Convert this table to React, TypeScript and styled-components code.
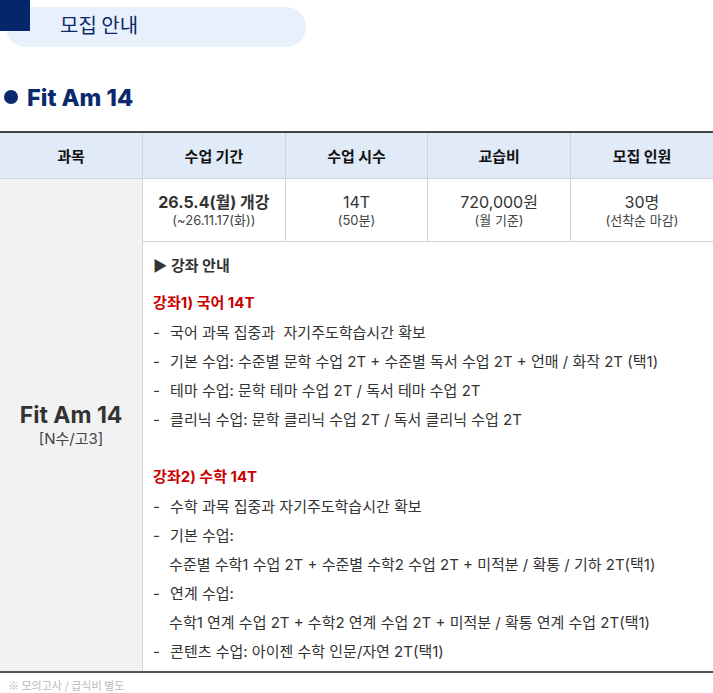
import React from 'react';
import styled, { createGlobalStyle } from 'styled-components';

const GlobalStyle = createGlobalStyle`
  body {
    margin: 0;
    background: #ffffff;
    font-family: Inter, "Noto Sans CJK KR", sans-serif;
    color: #333333;
  }
`;

const Page = styled.div`
  width: 713px;
`;

const TopBar = styled.div`
  position: relative;
  height: 47px;
  padding: 7px 0 0 6px;
  box-sizing: border-box;
`;

const Pill = styled.div`
  width: 300px;
  height: 40px;
  border-radius: 20px;
  background: #e8f0fc;
  display: flex;
  align-items: center;
  padding: 0 0 5px 54px;
  box-sizing: border-box;
  font-size: 20px;
  color: #0b2a6b;
  font-family: "Noto Sans CJK KR", sans-serif;
`;

const Corner = styled.span`
  position: absolute;
  left: 0;
  top: 0;
  width: 30px;
  height: 31px;
  background: #06266b;
`;

const Title = styled.h2`
  margin: 0;
  height: 84px;
  box-sizing: border-box;
  padding: 16px 0 0 4px;
  display: flex;
  align-items: center;
  gap: 9px;
  font-size: 23.5px;
  font-weight: 800;
  color: #0b2a6e;
  font-family: Inter, "Noto Sans CJK KR", sans-serif;

  &::before {
    content: '';
    width: 14px;
    height: 14px;
    border-radius: 50%;
    background: #0b2a6e;
  }
`;

const Table = styled.table`
  width: 713px;
  border-collapse: collapse;
  table-layout: fixed;
  border-top: 2px solid #444;
  border-bottom: 2px solid #555;
`;

const Th = styled.th`
  height: 45px;
  padding: 0;
  background: #e1eaf7;
  border: 1px solid #cfd4da;
  border-top: none;
  font-size: 15px;
  font-weight: 700;
  color: #111;
  font-family: "Noto Sans CJK KR", sans-serif;
  &:first-child { border-left: none; }
  &:last-child { border-right: none; }
`;

const Td = styled.td<{ $sub?: boolean }>`
  height: 62px;
  padding: 0;
  border: 1px solid #cfd4da;
  text-align: center;
  vertical-align: middle;
  background: ${p => (p.$sub ? '#f2f2f2' : '#fff')};
  &:last-child { border-right: none; }
`;

const SubjectCell = styled(Td)`
  border-left: none;
  border-bottom: none;
`;

const SubjectName = styled.div`
  font-size: 23px;
  font-weight: 700;
  color: #333;
  line-height: 28px;
`;

const SubjectTag = styled.div`
  font-size: 15px;
  color: #444;
  line-height: 20px;
`;

const Main = styled.div<{ $bold?: boolean }>`
  font-size: 16px;
  font-weight: ${p => (p.$bold ? 700 : 400)};
  color: #333;
  line-height: 20px;
`;

const Sub = styled.div`
  font-size: 13px;
  color: #444;
  line-height: 17px;
`;

const ContentCell = styled.td`
  border-left: 1px solid #cfd4da;
  border-bottom: none;
  padding: 9px 0 5px 10px;
  text-align: left;
  vertical-align: top;
  font-family: Inter, "Noto Sans CJK KR", sans-serif;
  font-size: 15px;
  color: #333;
`;

const Guide = styled.div`
  line-height: 29px;
  font-size: 15px;
  font-weight: 700;
  color: #333;
`;

const CourseTitle = styled.div<{ $gap: number }>`
  margin: ${p => p.$gap}px 0 1px;
  line-height: 29px;
  font-size: 15px;
  font-weight: 700;
  color: #c80000;
`;

const Item = styled.div<{ $indent?: boolean }>`
  display: flex;
  line-height: 29px;
  padding-left: ${p => (p.$indent ? '16px' : '0')};
  white-space: pre;
`;

const Dash = styled.span`
  width: 17px;
  flex: none;
`;

const Note = styled.p`
  margin: 0;
  padding: 4px 0 0 8px;
  font-size: 11px;
  line-height: 16px;
  color: #bbbbbb;
  font-family: "Noto Sans CJK KR", sans-serif;
`;

const headers = ['과목', '수업 기간', '수업 시수', '교습비', '모집 인원'];

type Line = { text: string; dash: boolean };

const korean: Line[] = [
  { text: '국어 과목 집중과  자기주도학습시간 확보', dash: true },
  { text: '기본 수업: 수준별 문학 수업 2T + 수준별 독서 수업 2T + 언매 / 화작 2T (택1)', dash: true },
  { text: '테마 수업: 문학 테마 수업 2T / 독서 테마 수업 2T', dash: true },
  { text: '클리닉 수업: 문학 클리닉 수업 2T / 독서 클리닉 수업 2T', dash: true },
];

const math: Line[] = [
  { text: '수학 과목 집중과 자기주도학습시간 확보', dash: true },
  { text: '기본 수업:', dash: true },
  { text: '수준별 수학1 수업 2T + 수준별 수학2 수업 2T + 미적분 / 확통 / 기하 2T(택1)', dash: false },
  { text: '연계 수업:', dash: true },
  { text: '수학1 연계 수업 2T + 수학2 연계 수업 2T + 미적분 / 확통 연계 수업 2T(택1)', dash: false },
  { text: '콘텐츠 수업: 아이젠 수학 인문/자연 2T(택1)', dash: true },
];

const renderLines = (lines: Line[]) =>
  lines.map((l, i) => (
    <Item key={i} $indent={!l.dash}>
      {l.dash && <Dash>-</Dash>}
      {l.text}
    </Item>
  ));

export default function App() {
  return (
    <Page>
      <GlobalStyle />
      <TopBar>
        <Corner />
        <Pill>모집 안내</Pill>
      </TopBar>

      <Title>Fit Am 14</Title>

      <Table>
        <thead>
          <tr>
            {headers.map(h => (
              <Th key={h}>{h}</Th>
            ))}
          </tr>
        </thead>
        <tbody>
          <tr>
            <SubjectCell $sub rowSpan={2}>
              <SubjectName>Fit Am 14</SubjectName>
              <SubjectTag>[N수/고3]</SubjectTag>
            </SubjectCell>
            <Td>
              <Main $bold>26.5.4(월) 개강</Main>
              <Sub>(~26.11.17(화))</Sub>
            </Td>
            <Td>
              <Main>14T</Main>
              <Sub>(50분)</Sub>
            </Td>
            <Td>
              <Main>720,000원</Main>
              <Sub>(월 기준)</Sub>
            </Td>
            <Td>
              <Main>30명</Main>
              <Sub>(선착순 마감)</Sub>
            </Td>
          </tr>
          <tr>
            <ContentCell colSpan={4}>
              <Guide>▶ 강좌 안내</Guide>
              <CourseTitle $gap={8}>강좌1) 국어 14T</CourseTitle>
              {renderLines(korean)}
              <CourseTitle $gap={28}>강좌2) 수학 14T</CourseTitle>
              {renderLines(math)}
            </ContentCell>
          </tr>
        </tbody>
      </Table>

      <Note>※ 모의고사 / 급식비 별도</Note>
    </Page>
  );
}
